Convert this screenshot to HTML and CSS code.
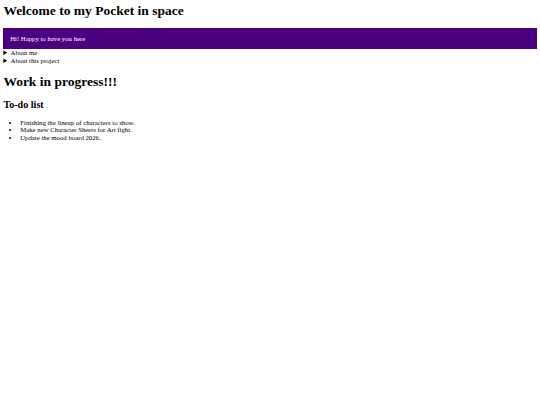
FILE: index.html
```html
<!DOCTYPE html>
<html>
<head>
<meta charset="utf-8">
<title>Pocket in space</title>
<link rel="stylesheet" href="styles.css">
</head>
<body class="page">
<h1 class="title">Welcome to my Pocket in space</h1>
<div class="banner">Hi! Happy to have you here</div>
<details class="info"><summary>About me</summary><p>Hello!</p></details>
<details class="info"><summary>About this project</summary><p>A little corner of the web.</p></details>
<h1 class="section">Work in progress!!!</h1>
<h2 class="sub">To-do list</h2>
<ul class="todo">
<li>Finishing the lineup of characters to show.</li>
<li>Make new Character Sheets for Art fight.</li>
<li>Update the mood board 2026.</li>
</ul>
</body>
</html>
```
FILE: styles.css
```css
html { background: #fff; }
.page {
  margin: 3.375px;
  font-family: "Liberation Serif", "Times New Roman", serif;
  font-size: 6.75px;
  color: #000;
}
.title {
  font-size: 13.5px;
  margin: 0 0 9.05px;
  font-weight: bold;
}
.banner {
  background: #4b0082;
  color: #fff;
  padding: 6.75px;
}
.info summary {
  cursor: pointer;
  line-height: 8px;
}
.section {
  font-size: 13.5px;
  margin: 9.05px 0;
  font-weight: bold;
}
.sub {
  font-size: 10.125px;
  margin: 8.4px 0 8.6px;
  font-weight: bold;
}
.todo {
  margin: 6.75px 0;
  padding-left: 16.875px;
  line-height: 7.6px;
}
```
